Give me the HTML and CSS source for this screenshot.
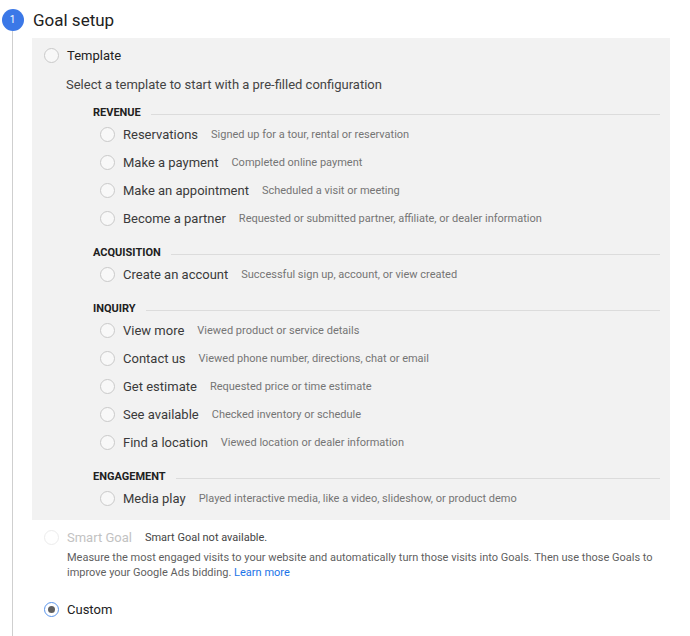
FILE: index.html
```html
<!DOCTYPE html>
<html>
<head>
<meta charset="utf-8">
<link rel="stylesheet" href="styles.css">
</head>
<body>
<div class="step">
  <div class="rail">
    <div class="step-num">1</div>
    <div class="rail-line"></div>
  </div>
  <div class="content">
    <h1 class="title">Goal setup</h1>
    <div class="panel">
      <div class="top-row">
        <span class="radio"></span>
        <span class="top-label">Template</span>
      </div>
      <p class="intro">Select a template to start with a pre-filled configuration</p>
      <div class="groups">
        <div class="group">
          <div class="group-head"><span class="group-name">REVENUE</span><span class="group-line"></span></div>
          <div class="opt"><span class="radio"></span><span class="opt-label">Reservations</span><span class="opt-desc">Signed up for a tour, rental or reservation</span></div>
          <div class="opt"><span class="radio"></span><span class="opt-label">Make a payment</span><span class="opt-desc">Completed online payment</span></div>
          <div class="opt"><span class="radio"></span><span class="opt-label">Make an appointment</span><span class="opt-desc">Scheduled a visit or meeting</span></div>
          <div class="opt"><span class="radio"></span><span class="opt-label">Become a partner</span><span class="opt-desc">Requested or submitted partner, affiliate, or dealer information</span></div>
        </div>
        <div class="group">
          <div class="group-head"><span class="group-name">ACQUISITION</span><span class="group-line"></span></div>
          <div class="opt"><span class="radio"></span><span class="opt-label">Create an account</span><span class="opt-desc">Successful sign up, account, or view created</span></div>
        </div>
        <div class="group">
          <div class="group-head"><span class="group-name">INQUIRY</span><span class="group-line"></span></div>
          <div class="opt"><span class="radio"></span><span class="opt-label">View more</span><span class="opt-desc">Viewed product or service details</span></div>
          <div class="opt"><span class="radio"></span><span class="opt-label">Contact us</span><span class="opt-desc">Viewed phone number, directions, chat or email</span></div>
          <div class="opt"><span class="radio"></span><span class="opt-label">Get estimate</span><span class="opt-desc">Requested price or time estimate</span></div>
          <div class="opt"><span class="radio"></span><span class="opt-label">See available</span><span class="opt-desc">Checked inventory or schedule</span></div>
          <div class="opt"><span class="radio"></span><span class="opt-label">Find a location</span><span class="opt-desc">Viewed location or dealer information</span></div>
        </div>
        <div class="group">
          <div class="group-head"><span class="group-name">ENGAGEMENT</span><span class="group-line"></span></div>
          <div class="opt"><span class="radio"></span><span class="opt-label">Media play</span><span class="opt-desc">Played interactive media, like a video, slideshow, or product demo</span></div>
        </div>
      </div>
    </div>
    <div class="smart-row">
      <span class="radio radio-disabled"></span>
      <span class="top-label disabled">Smart Goal</span>
      <span class="smart-note">Smart Goal not available.</span>
    </div>
    <p class="smart-desc">Measure the most engaged visits to your website and automatically turn those visits into Goals. Then use those Goals to improve your Google Ads bidding. <a class="link" href="#">Learn more</a></p>
    <div class="custom-row">
      <span class="radio radio-checked"></span>
      <span class="top-label">Custom</span>
    </div>
  </div>
</div>
</body>
</html>
```
FILE: styles.css
```css
* { box-sizing: border-box; }
html, body { margin: 0; padding: 0; background: #fff; }
body {
  font-family: Roboto, "Noto Sans", Arial, sans-serif;
  color: #212121;
  width: 690px;
  height: 636px;
  overflow: hidden;
}
.step {
  display: flex;
  gap: 8px;
  min-height: 636px;
  padding-top: 9px;
}
.rail {
  width: 24px;
  padding-left: 1px;
  display: flex;
  flex-direction: column;
  align-items: center;
}
.step-num {
  width: 22px;
  height: 22px;
  border-radius: 50%;
  background: #3b78e7;
  color: #fff;
  font-size: 10px;
  line-height: 22px;
  text-align: center;
  flex: none;
}
.rail-line {
  flex: 1;
  width: 1px;
  background: #cfcfcf;
}
.content {
  width: 638px;
}
.title {
  margin: 0 0 7px 1px;
  padding-top: 1px;
  font-size: 17px;
  font-weight: 400;
  line-height: 21px;
  color: #212121;
}
.panel {
  background: #f2f2f2;
  padding: 0 10px 8px 12px;
}
.top-row, .custom-row {
  height: 34px;
  display: flex;
  align-items: center;
  gap: 8px;
}
.radio {
  width: 15px;
  height: 15px;
  border-radius: 50%;
  border: 1px solid #c9c9c9;
  background: #f8f8f8;
  flex: none;
  display: inline-flex;
  align-items: center;
  justify-content: center;
}
.radio-disabled {
  border-color: #ececec;
  background: #fff;
}
.radio-checked {
  border: 1.5px solid #5a95ec;
  background: #fff;
}
.radio-checked::after {
  content: "";
  width: 7px;
  height: 7px;
  border-radius: 50%;
  background: #5f5f5f;
}
.top-label {
  font-size: 13px;
  color: #212121;
}
.top-label.disabled { color: #c2c2c2; }
.intro {
  margin: 3px 0 0 22px;
  font-size: 13px;
  line-height: 20px;
  color: #444;
}
.groups {
  margin-top: 9px;
  padding-left: 49px;
}
.group + .group { margin-top: 12px; }
.group-head {
  height: 16px;
  display: flex;
  align-items: center;
}
.group-name {
  font-size: 11px;
  font-weight: 700;
  color: #212121;
}
.group-line {
  flex: 1;
  height: 1px;
  background: #dcdcdc;
  margin-left: 10px;
  margin-top: 5px;
}
.opt {
  height: 28px;
  display: flex;
  align-items: center;
  padding-left: 7px;
}
.opt-label {
  font-size: 13px;
  color: #3a3a3a;
  margin-left: 8px;
}
.opt-desc {
  font-size: 11px;
  color: #757575;
  margin-left: 13px;
}
.smart-row {
  margin-top: 2px;
  height: 30px;
  display: flex;
  align-items: center;
  padding-left: 12px;
}
.smart-row .top-label { margin-left: 8px; }
.smart-note {
  font-size: 11px;
  color: #444;
  margin-left: 13px;
}
.smart-desc {
  margin: -2px 0 0 35px;
  font-size: 11px;
  line-height: 15px;
  color: #5f5f5f;
}
.link { color: #1a73e8; text-decoration: none; }
.custom-row {
  margin-top: 12px;
  padding-left: 12px;
}
```
